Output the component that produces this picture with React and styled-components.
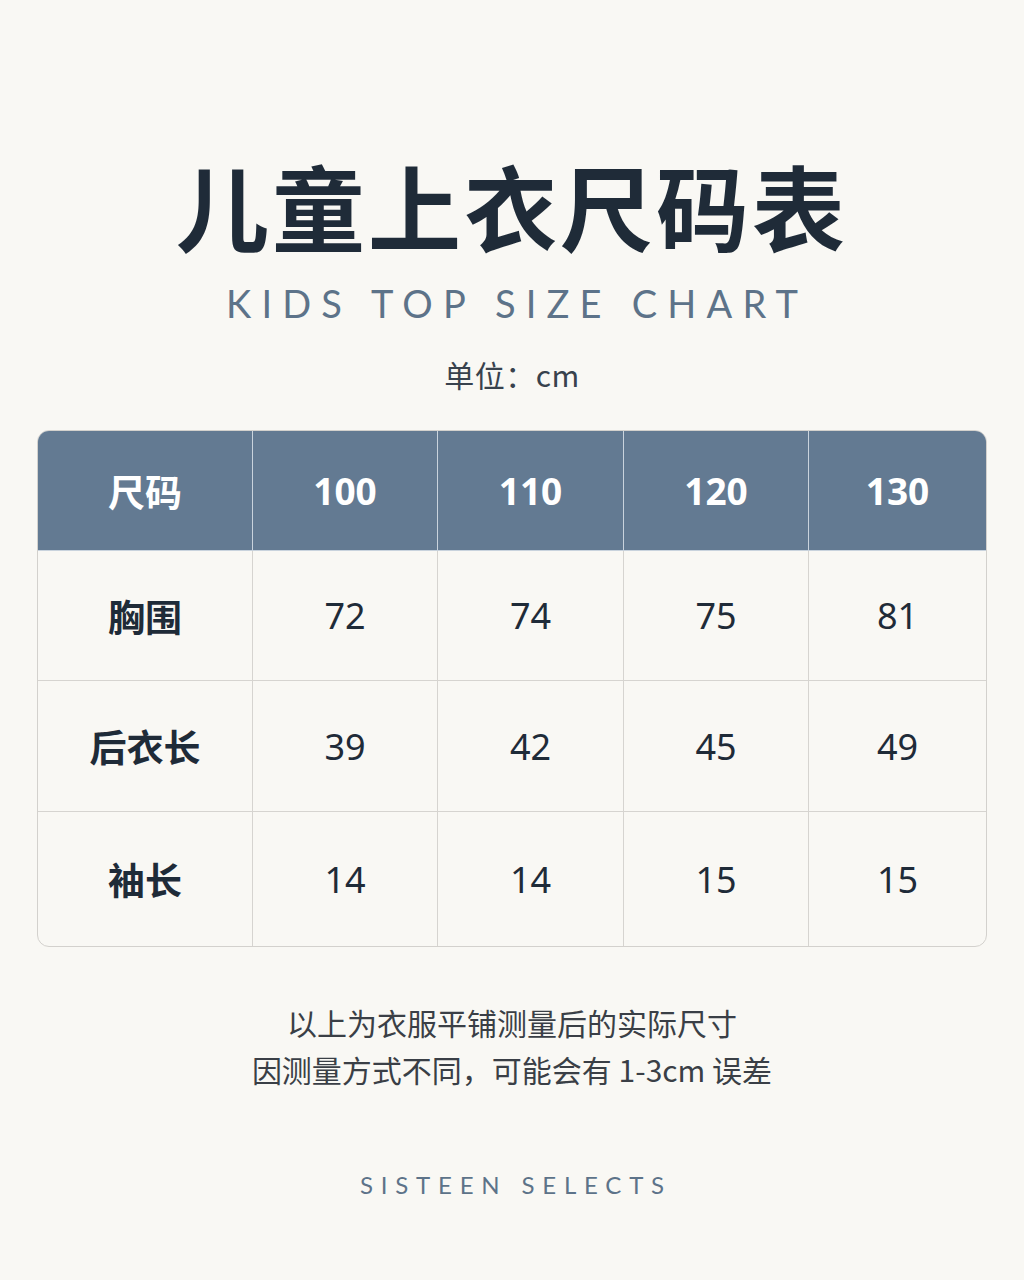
import React from 'react';
import styled, { createGlobalStyle } from 'styled-components';

const GlobalStyle = createGlobalStyle`
  html, body {
    margin: 0;
    padding: 0;
    background: #f9f8f4;
  }
  body {
    font-family: "Noto Sans", "Noto Sans CJK SC", sans-serif;
  }
`;

const Page = styled.div`
  width: 1024px;
  height: 1280px;
  display: flex;
  flex-direction: column;
  align-items: center;
  background: #f9f8f4;
  color: #1f2b38;
`;

const Title = styled.h1`
  margin: 150px 0 0;
  font-family: "Noto Sans CJK SC", sans-serif;
  font-weight: 700;
  font-size: 93px;
  line-height: 110px;
  letter-spacing: 3px;
  color: #1f2b38;
`;

const Subtitle = styled.div`
  margin-top: 18px;
  font-family: Lato, "Noto Sans", sans-serif;
  font-weight: 400;
  font-size: 38px;
  line-height: 50px;
  letter-spacing: 10.2px;
  padding-left: 10.2px;
  color: #5d7389;
`;

const Unit = styled.div`
  margin-top: 26px;
  font-family: "Noto Sans CJK SC", sans-serif;
  font-size: 30px;
  line-height: 40px;
  letter-spacing: 0.5px;
  color: #38424d;
`;

const Table = styled.div`
  margin-top: 36px;
  width: 950px;
  display: grid;
  grid-template-columns: 215px 185px 186px 185px 1fr;
  grid-template-rows: 120px 130px 131px 134px;
  border: 1px solid #d3d1cd;
  border-radius: 12px;
  overflow: hidden;
  box-sizing: border-box;
`;

const Cell = styled.div`
  display: flex;
  align-items: center;
  justify-content: center;
  border-right: ${p => (p.$last ? 'none' : '1.5px solid')};
  border-bottom: ${p => (p.$bottom ? 'none' : '1.5px solid')};
  border-color: ${p => (p.$head ? '#c9d3dd' : '#d6d4d0')};
  background: ${p => (p.$head ? '#637a92' : 'transparent')};
  color: ${p => (p.$head ? '#ffffff' : '#1f2b38')};
  font-family: "Noto Sans", "Noto Sans CJK SC", sans-serif;
  font-weight: ${p => (p.$bold ? 700 : 400)};
  font-size: ${p => (p.$bold ? '37px' : '36px')};
`;

const Note = styled.div`
  margin-top: 52px;
  font-family: "Noto Sans CJK SC", sans-serif;
  font-size: 30px;
  line-height: 47px;
  text-align: center;
  color: #3a3f46;
`;

const Brand = styled.div`
  margin-top: 77px;
  font-family: Lato, "Noto Sans", sans-serif;
  font-size: 24px;
  letter-spacing: 7.8px;
  padding-left: 7.8px;
  color: #5d7389;
`;

const header = ['尺码', '100', '110', '120', '130'];
const rows = [
  ['胸围', '72', '74', '75', '81'],
  ['后衣长', '39', '42', '45', '49'],
  ['袖长', '14', '14', '15', '15'],
];

export default function App() {
  return (
    <Page>
      <GlobalStyle />
      <Title>儿童上衣尺码表</Title>
      <Subtitle>KIDS TOP SIZE CHART</Subtitle>
      <Unit>单位：cm</Unit>
      <Table>
        {header.map((h, i) => (
          <Cell key={h} $head $bold $last={i === 4}>
            {h}
          </Cell>
        ))}
        {rows.map((row, r) =>
          row.map((v, i) => (
            <Cell
              key={`${r}-${i}`}
              $bold={i === 0}
              $last={i === 4}
              $bottom={r === rows.length - 1}
            >
              {v}
            </Cell>
          ))
        )}
      </Table>
      <Note>
        以上为衣服平铺测量后的实际尺寸
        <br />
        因测量方式不同，可能会有 1-3cm 误差
      </Note>
      <Brand>SISTEEN SELECTS</Brand>
    </Page>
  );
}
